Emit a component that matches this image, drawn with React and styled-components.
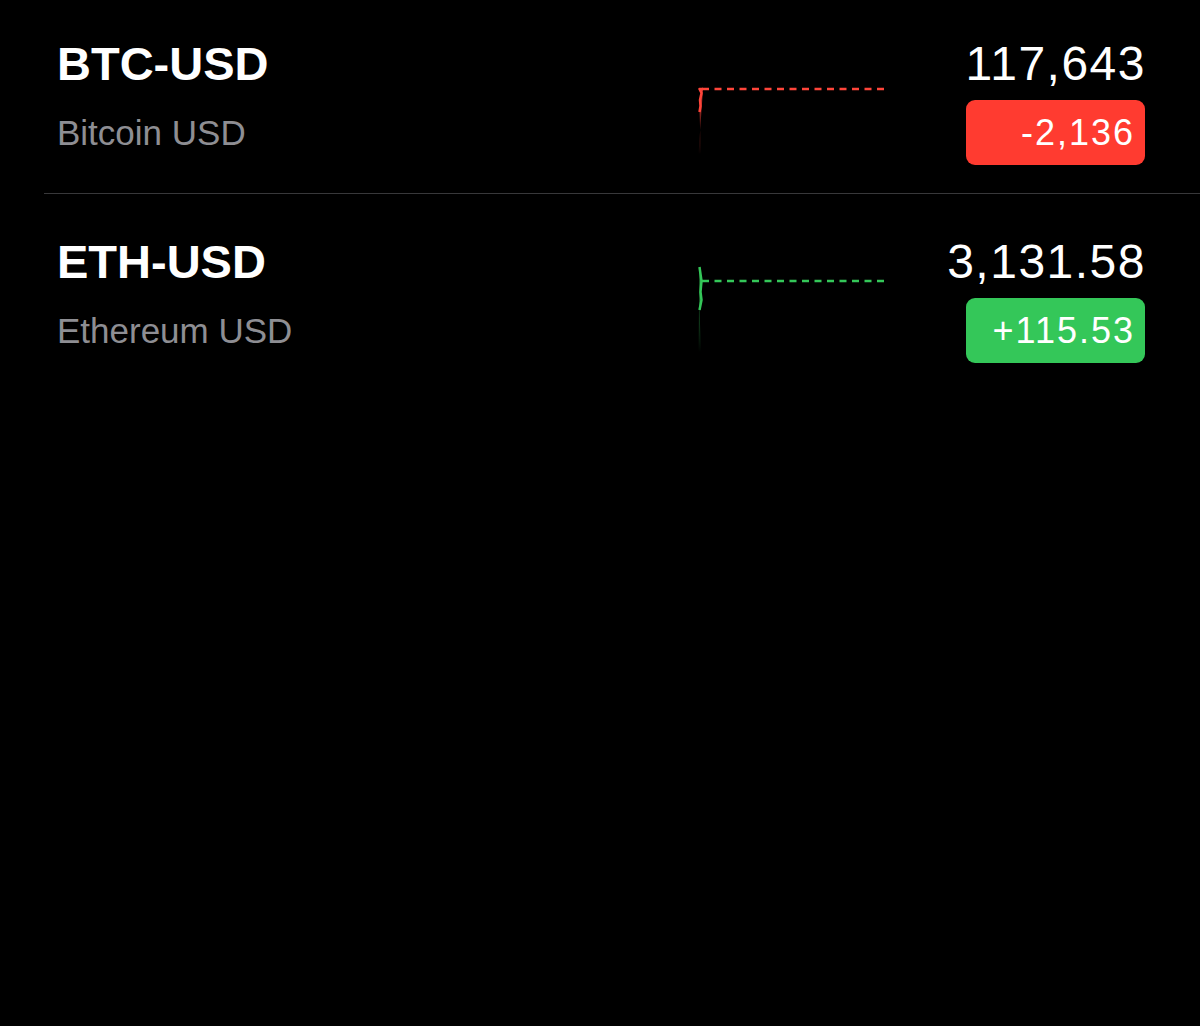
import styled, { createGlobalStyle } from 'styled-components'

const GlobalStyle = createGlobalStyle`
  html, body {
    margin: 0;
    padding: 0;
    background: #000;
  }
  body {
    font-family: "Liberation Sans", Arial, sans-serif;
    color: #fff;
  }
`

const Screen = styled('div')`
  width: 1200px;
  height: 1026px;
  background: #000;
  overflow: hidden;
`

const List = styled('div')`
  display: flex;
  flex-direction: column;
  margin-top: -4px;
`

const Row = styled('div')`
  display: grid;
  grid-template-columns: 1fr 186px 179px;
  column-gap: 82px;
  align-items: start;
  margin-left: 44px;
  padding: 40px 55px 28px 13px;
  border-bottom: ${(p) => (p.last ? 'none' : '1px solid #38383a')};
`

const Names = styled('div')`
  display: flex;
  flex-direction: column;
  gap: 20px;
`

const Symbol = styled('div')`
  font-size: 47px;
  line-height: 56px;
  font-weight: 700;
  color: #fff;
`

const FullName = styled('div')`
  font-size: 35px;
  line-height: 42px;
  color: #8e8e93;
`

const Quote = styled('div')`
  display: flex;
  flex-direction: column;
  align-items: flex-end;
  gap: 8px;
`

const Price = styled('div')`
  font-size: 48px;
  line-height: 56px;
  letter-spacing: 1.5px;
  margin-right: -1px;
  color: #fff;
`

const Change = styled('div')`
  width: 100%;
  height: 65px;
  box-sizing: border-box;
  display: flex;
  align-items: center;
  justify-content: flex-end;
  padding-right: 10px;
  border-radius: 9px;
  background: ${(p) => (p.up ? '#34c759' : '#ff3b30')};
  font-size: 36px;
  letter-spacing: 2px;
  color: #fff;
`

const Spark = styled('svg')`
  display: block;
  width: 186px;
  height: 120px;
`

const MiniChart = ({ id, color, base, line }) => (
  <Spark viewBox='0 0 186 120'>
    <defs>
      <linearGradient id={id} x1='0' y1='0' x2='0' y2='1'>
        <stop offset='0' stopColor={color} stopOpacity='0.8' />
        <stop offset='1' stopColor={color} stopOpacity='0' />
      </linearGradient>
    </defs>
    <line x1='4' y1={base} x2='186' y2={base} stroke={color} strokeWidth='2.5' strokeDasharray='7 5.5' />
    <polygon points={line.map((pt) => pt.join(',')).join(' ') + ' 3,118 0.5,118'} fill={`url(#${id})`} />
    <polyline points={line.map((pt) => pt.join(',')).join(' ')} fill='none' stroke={color} strokeWidth='2.5' strokeLinejoin='round' />
  </Spark>
)

const tickers = [
  {
    symbol: 'BTC-USD',
    name: 'Bitcoin USD',
    price: '117,643',
    change: '-2,136',
    up: false,
    color: '#ff453a',
    base: 53,
    line: [[5, 53], [1.5, 53], [3.5, 57], [2, 64], [2.5, 70], [1.5, 76]]
  },
  {
    symbol: 'ETH-USD',
    name: 'Ethereum USD',
    price: '3,131.58',
    change: '+115.53',
    up: true,
    color: '#34c759',
    base: 47,
    line: [[1.5, 33], [3.5, 47], [2.5, 58], [3.5, 66], [1.5, 76]]
  }
]

const App = () => {
  return (
    <Screen>
      <GlobalStyle />
      <List>
        {tickers.map((t, i) => (
          <Row key={t.symbol} last={i === tickers.length - 1}>
            <Names>
              <Symbol>{t.symbol}</Symbol>
              <FullName>{t.name}</FullName>
            </Names>
            <MiniChart id={'g' + i} color={t.color} base={t.base} line={t.line} />
            <Quote>
              <Price>{t.price}</Price>
              <Change up={t.up}>{t.change}</Change>
            </Quote>
          </Row>
        ))}
      </List>
    </Screen>
  )
}

export default App
